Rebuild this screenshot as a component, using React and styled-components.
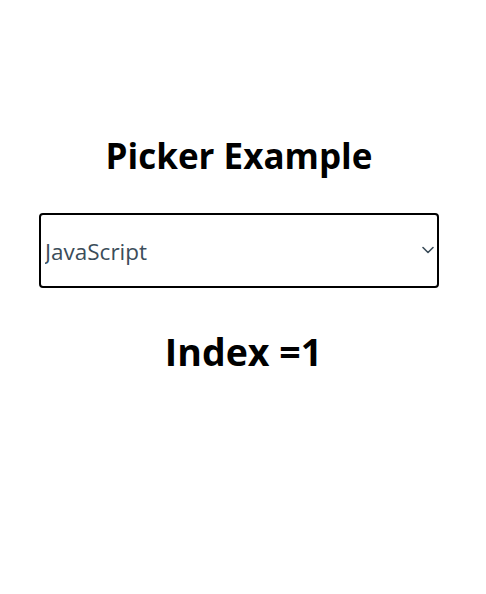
import React, { useState } from "react"
import styled, { createGlobalStyle } from "styled-components"

const GlobalStyle = createGlobalStyle`
  html, body {
    margin: 0;
    padding: 0;
    background: #ffffff;
  }
  body {
    font-family: "Open Sans", "Noto Sans", sans-serif;
  }
`

const Screen = styled.div`
  width: 478px;
  height: 594px;
  display: flex;
  flex-direction: column;
  align-items: center;
  padding-top: 132px;
  box-sizing: border-box;
`

const Title = styled.h1`
  margin: 0;
  font-size: 35px;
  font-weight: 700;
  color: #000;
  line-height: 48px;
`

const PickerWrap = styled.div`
  position: relative;
  width: 400px;
  height: 75px;
  margin-top: 33px;
`

const Select = styled.select`
  appearance: none;
  width: 100%;
  height: 100%;
  box-sizing: border-box;
  border: 2px solid #000;
  border-radius: 4px;
  background: #fff;
  padding: 2px 0 0 4px;
  font-family: inherit;
  font-size: 22.5px;
  color: #3b4d5a;
  outline: none;
`

const Chevron = styled.svg`
  position: absolute;
  right: 5px;
  top: 33px;
  width: 12px;
  height: 8px;
  pointer-events: none;
`

const Index = styled.h2`
  margin: 38px 0 0;
  padding-left: 9px;
  font-size: 37.5px;
  font-weight: 700;
  color: #000;
  line-height: 52px;
`

const languages = ["Java", "JavaScript", "Python", "C++"]

const App = () => {
  const [index, setIndex] = useState(1)
  return (
    <Screen>
      <GlobalStyle />
      <Title>Picker Example</Title>
      <PickerWrap>
        <Select value={index} onChange={(e) => setIndex(Number(e.target.value))}>
          {languages.map((lang, i) => (
            <option key={lang} value={i}>
              {lang}
            </option>
          ))}
        </Select>
        <Chevron viewBox="0 0 12 8">
          <path
            d="M1 1.5l5 5 5-5"
            fill="none"
            stroke="#3b4d5a"
            strokeWidth="1.6"
            strokeLinecap="round"
            strokeLinejoin="round"
          />
        </Chevron>
      </PickerWrap>
      <Index>Index ={index}</Index>
    </Screen>
  )
}

export default App
